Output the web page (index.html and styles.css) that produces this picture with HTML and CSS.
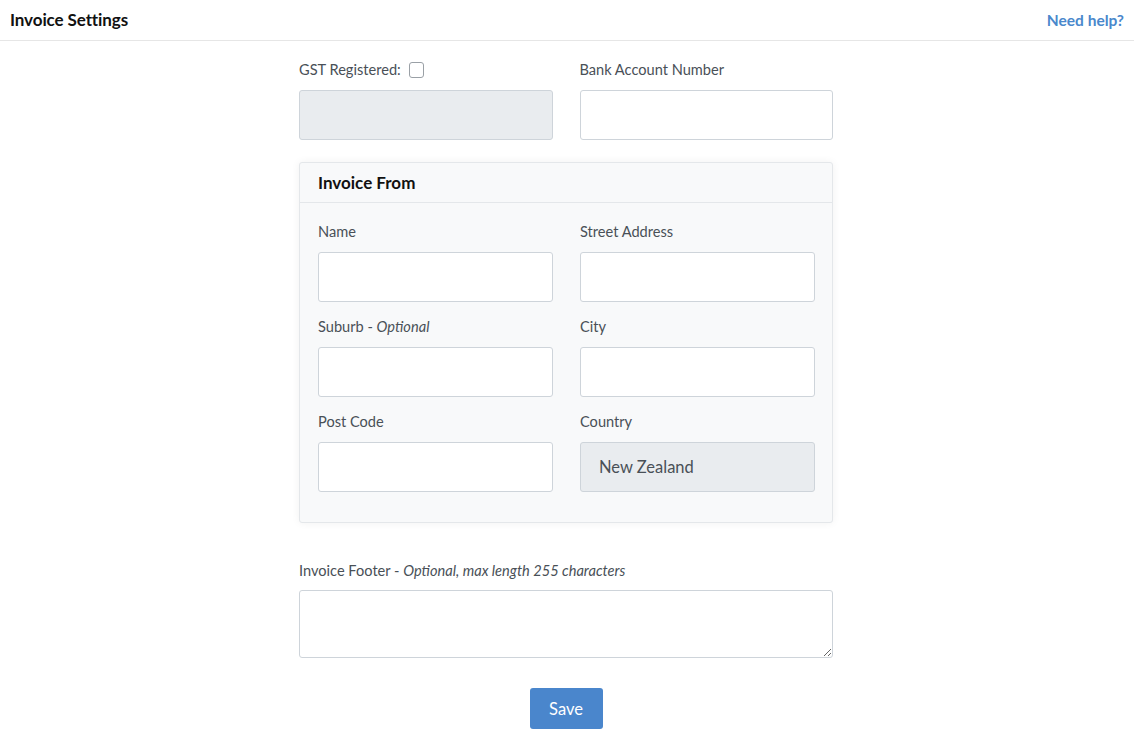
FILE: index.html
```html
<!DOCTYPE html>
<html>
<head>
<meta charset="utf-8">
<link rel="stylesheet" href="styles.css">
</head>
<body>
<header class="topbar">
  <h1 class="title">Invoice Settings</h1>
  <a class="help" href="#">Need help?</a>
</header>
<main class="page">
  <form class="form">
    <div class="row">
      <div class="field">
        <label class="label">GST Registered: <span class="checkbox"></span></label>
        <input class="input disabled" disabled>
      </div>
      <div class="field">
        <label class="label">Bank Account Number</label>
        <input class="input">
      </div>
    </div>
    <section class="card">
      <div class="card-head">Invoice From</div>
      <div class="card-body">
        <div class="row">
          <div class="field">
            <label class="label">Name</label>
            <input class="input">
          </div>
          <div class="field">
            <label class="label">Street Address</label>
            <input class="input">
          </div>
        </div>
        <div class="row">
          <div class="field">
            <label class="label">Suburb - <em>Optional</em></label>
            <input class="input">
          </div>
          <div class="field">
            <label class="label">City</label>
            <input class="input">
          </div>
        </div>
        <div class="row">
          <div class="field">
            <label class="label">Post Code</label>
            <input class="input">
          </div>
          <div class="field">
            <label class="label">Country</label>
            <div class="input disabled value">New Zealand</div>
          </div>
        </div>
      </div>
    </section>
    <div class="field footer-field">
      <label class="label">Invoice Footer - <em>Optional, max length 255 characters</em></label>
      <textarea class="input textarea"></textarea>
    </div>
    <div class="actions">
      <button type="button" class="btn">Save</button>
    </div>
  </form>
</main>
</body>
</html>
```
FILE: styles.css
```css
* { box-sizing: border-box; }
html, body { margin: 0; padding: 0; background: #fff; }
body { font-family: Lato, "Liberation Sans", sans-serif; color: #495057; }

.topbar {
  height: 41px;
  display: flex;
  align-items: center;
  justify-content: space-between;
  padding: 0 10px 1px 10px;
  border-bottom: 1px solid #e6e6e6;
}
.title { margin: 0; font-size: 17px; font-weight: 700; color: #111; letter-spacing: -0.1px; }
.help { color: #4a88cc; font-weight: 700; font-size: 15.5px; text-decoration: none; }

.page { display: flex; justify-content: center; padding-top: 19px; }
.form { width: 534px; margin-left: -2px; }

.row { display: grid; grid-template-columns: 1fr 1fr; column-gap: 27px; }
.field { display: flex; flex-direction: column; margin-bottom: 15px; }
.label {
  display: block;
  font-size: 14.6px;
  line-height: 20px;
  height: 20px;
  margin-bottom: 10px;
  white-space: nowrap;
}
.label em { font-style: italic; }
.checkbox {
  display: inline-block;
  vertical-align: -3px;
  width: 15px;
  height: 16px;
  border: 1px solid #9aa0a6;
  border-radius: 3px;
  background: #fff;
  margin-left: 5px;
}
.input {
  height: 50px;
  border: 1px solid #ced4da;
  border-radius: 3px;
  background: #fff;
  font: inherit;
  width: 100%;
  display: block;
  margin: 0;
}
.disabled { background: #e9ecef; }
.value { display: flex; align-items: center; padding: 0 18px; font-size: 16.5px; color: #495057; }

.card {
  background: #f8f9fa;
  border: 1px solid #e4e7ea;
  border-radius: 3px;
  box-shadow: 0 0 8px rgba(0,0,0,0.06);
  margin-top: 7px;
  margin-bottom: 38px;
}
.card-head {
  height: 40px;
  display: flex;
  align-items: center;
  padding: 0 18px;
  font-size: 17px;
  font-weight: 700;
  color: #111;
  border-bottom: 1px solid #e4e7ea;
}
.card-body { padding: 19px 17px 15px 18px; }

.footer-field { margin-bottom: 30px; }
.footer-field .label { margin-bottom: 9px; }
.textarea { height: 68px; resize: vertical; }

.actions { display: flex; justify-content: center; }
.btn {
  width: 73px;
  height: 41px;
  background: #4a86cc;
  color: #fff;
  border: none;
  border-radius: 3px;
  font-family: inherit;
  font-size: 16.5px;
}
```
